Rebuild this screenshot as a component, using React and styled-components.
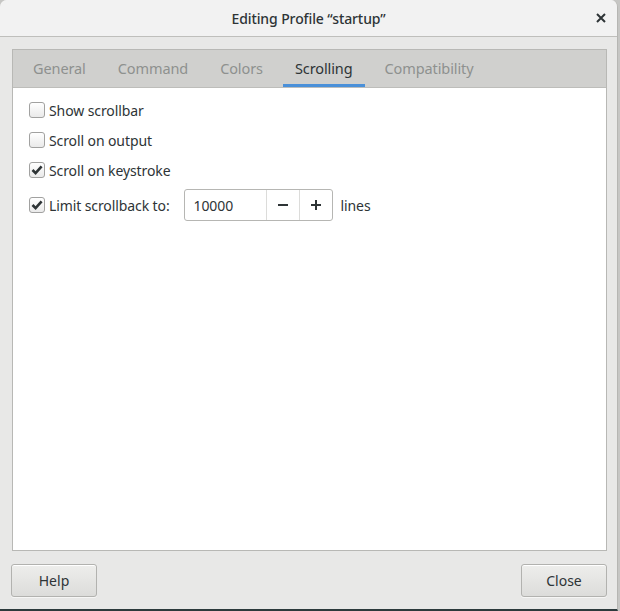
import React from 'react';
import styled, { createGlobalStyle } from 'styled-components';

const GlobalStyle = createGlobalStyle`
  html, body { margin: 0; padding: 0; }
  body {
    background: #c6c6c4;
    font-family: "Noto Sans", "DejaVu Sans", sans-serif;
    color: #2e3436;
  }
`;

const Window = styled.div`
  width: 617px;
  height: 609px;
  background: #e8e8e7;
  border-top-left-radius: 7px;
  border-top-right-radius: 7px;
  border-right: 1px solid #b6b6b3;
  display: flex;
  flex-direction: column;
  overflow: hidden;
  border-bottom: 2px solid #2c3a3c;
`;

const TitleBar = styled.div`
  height: 36px;
  flex: none;
  background: #f2f2f2;
  border-bottom: 1px solid #bfbfbc;
  display: grid;
  grid-template-columns: 40px 1fr 40px;
  align-items: center;
`;

const Title = styled.div`
  grid-column: 2;
  text-align: center;
  font-size: 14px;
  font-weight: 500;
  color: #2e3436;
  letter-spacing: -0.1px;
`;

const CloseX = styled.button`
  grid-column: 3;
  justify-self: end;
  margin-right: 6px;
  width: 20px;
  height: 20px;
  border: 0;
  background: none;
  padding: 0;
  display: flex;
  align-items: center;
  justify-content: center;
`;

const Body = styled.div`
  flex: 1;
  display: flex;
  flex-direction: column;
  padding: 12px 10px 12px 12px;
`;

const Notebook = styled.div`
  flex: 1;
  display: flex;
  flex-direction: column;
  border: 1px solid #b8b8b5;
  background: #fff;
`;

const TabBar = styled.div`
  height: 37px;
  background: #d0d0ce;
  border-bottom: 1px solid #bdbdba;
  display: flex;
  padding-left: 4px;
`;

const Tab = styled.div`
  padding: 2px 12px 0;
  margin: 0 4px;
  display: flex;
  align-items: center;
  font-size: 14.5px;
  color: ${p => (p.active ? '#2e3436' : '#8e918f')};
  border-bottom: 3px solid ${p => (p.active ? '#4a90d9' : 'transparent')};
  letter-spacing: -0.1px;
`;

const Page = styled.div`
  flex: 1;
  padding: 11px 16px;
  display: flex;
  flex-direction: column;
  gap: 8px;
`;

const Row = styled.label`
  display: flex;
  align-items: center;
  gap: 4px;
  font-size: 14px;
  color: #2e3436;
  min-height: 22px;
  letter-spacing: -0.1px;
`;

const Box = styled.span`
  width: 14px;
  height: 14px;
  border: 1px solid #a1a1a0;
  border-radius: 3px;
  background: linear-gradient(#ffffff, #eaeaea);
  display: flex;
  align-items: center;
  justify-content: center;
  flex: none;
`;

const Spin = styled.div`
  display: flex;
  height: 30px;
  margin-left: 10px;
  margin-right: 4px;
  border: 1px solid #b6b6b3;
  border-radius: 3px;
  background: #fff;
`;

const SpinEntry = styled.div`
  width: 72px;
  padding-left: 9px;
  display: flex;
  align-items: center;
  font-size: 14px;
`;

const SpinButton = styled.div`
  width: 32px;
  border-left: 1px solid #dcdcda;
  display: flex;
  align-items: center;
  justify-content: center;
`;

const Footer = styled.div`
  display: flex;
  justify-content: space-between;
  padding-top: 13px;
  margin-left: -1px;
`;

const Button = styled.button`
  width: 86px;
  height: 33px;
  border: 1px solid #b2b2af;
  border-radius: 3px;
  background: linear-gradient(#eeeeec, #dcdcda);
  box-shadow: inset 0 1px #fff, 0 1px rgba(255,255,255,0.6);
  font-family: inherit;
  font-size: 14px;
  color: #2e3436;
`;

const Check = () => (
  <svg width="12" height="12" viewBox="0 0 12 12">
    <path d="M1.5 6 L4.6 9.2 L10.6 2.4" fill="none" stroke="#2e3436" strokeWidth="2.6" strokeLinejoin="miter" />
  </svg>
);

const CheckRow = ({ checked, children }) => (
  <Row>
    <Box>{checked && <Check />}</Box>
    {children}
  </Row>
);

const tabs = ['General', 'Command', 'Colors', 'Scrolling', 'Compatibility'];

export default function App() {
  return (
    <>
      <GlobalStyle />
      <Window>
        <TitleBar>
          <Title>Editing Profile “startup”</Title>
          <CloseX>
            <svg width="10" height="10" viewBox="0 0 10 10">
              <path d="M1 1 L9 9 M9 1 L1 9" stroke="#2e3436" strokeWidth="2" />
            </svg>
          </CloseX>
        </TitleBar>
        <Body>
          <Notebook>
            <TabBar>
              {tabs.map(t => (
                <Tab key={t} active={t === 'Scrolling'}>{t}</Tab>
              ))}
            </TabBar>
            <Page>
              <CheckRow>Show scrollbar</CheckRow>
              <CheckRow>Scroll on output</CheckRow>
              <CheckRow checked>Scroll on keystroke</CheckRow>
              <Row>
                <Box><Check /></Box>
                Limit scrollback to:
                <Spin>
                  <SpinEntry>10000</SpinEntry>
                  <SpinButton>
                    <svg width="12" height="12" viewBox="0 0 12 12">
                      <path d="M1 6 H11" stroke="#2e3436" strokeWidth="2" />
                    </svg>
                  </SpinButton>
                  <SpinButton>
                    <svg width="12" height="12" viewBox="0 0 12 12">
                      <path d="M1 6 H11 M6 1 V11" stroke="#2e3436" strokeWidth="2" />
                    </svg>
                  </SpinButton>
                </Spin>
                lines
              </Row>
            </Page>
          </Notebook>
          <Footer>
            <Button>Help</Button>
            <Button>Close</Button>
          </Footer>
        </Body>
      </Window>
    </>
  );
}
